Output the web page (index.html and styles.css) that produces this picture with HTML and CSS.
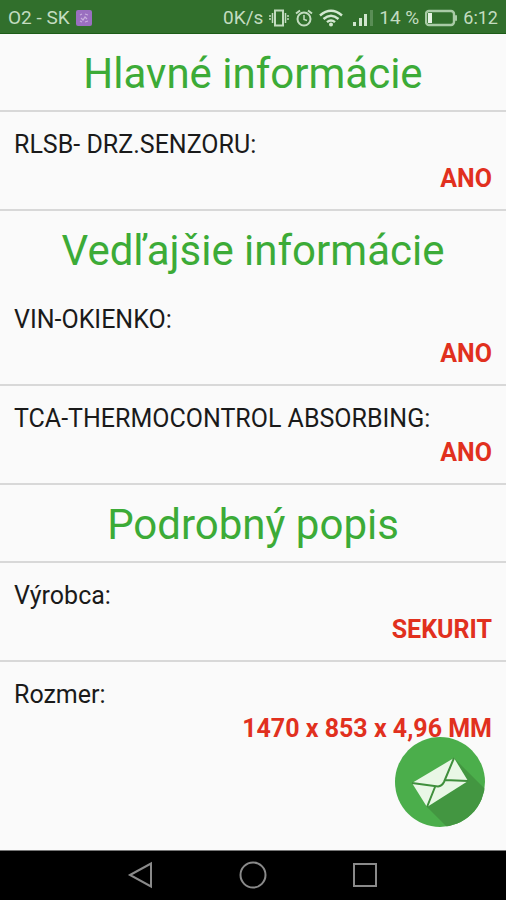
FILE: index.html
```html
<!DOCTYPE html>
<html lang="sk">

<head>
  <meta charset="UTF-8" />
  <meta name="viewport" content="width=device-width, initial-scale=1.0" />
  <title>Informácie</title>
  <link rel="stylesheet" href="styles.css">
</head>

<body>
  <!-- status bar -->
  <header class="status">
    <span class="carrier">O2 - SK</span>
    <svg class="app-icon" width="16" height="16" viewBox="0 0 16 16">
      <rect width="16" height="16" rx="2" fill="#9a6fc0" />
      <path d="M4 5l2 -1M9 4l3 1M5 8l2 2 2 -3 2 2M4 11l2 1M9 12l3 -1" fill="none" stroke="#c9aede" stroke-width="1.2" />
    </svg>
    <span class="speed">0K/s</span>
    <svg width="20" height="18" viewBox="0 0 20 18" fill="none" stroke="#c3dcc0" stroke-width="2">
      <rect x="6" y="1.500" width="8" height="15" />
      <path d="M3.500 4v10M16.500 4v10" stroke-width="1.500" />
      <path d="M1 6v6M19 6v6" stroke-width="1.500" stroke-dasharray="2 1" />
    </svg>
    <svg width="18" height="18" viewBox="0 0 18 18" fill="none" stroke="#c3dcc0" stroke-width="2">
      <circle cx="9" cy="10" r="6.500" />
      <path d="M9 6v4.500l3 1" stroke-width="1.500" />
      <path d="M1 4.500l4 -3M17 4.500l-4 -3" />
    </svg>
    <svg class="wifi" width="24" height="18" viewBox="0 0 24 18" fill="none" stroke="#d3e8d0" stroke-width="2.400">
      <path d="M1 6.500q11 -9.500 22 0" />
      <path d="M4.500 10q7.500 -6.500 15 0" />
      <path d="M8 13.200q4 -3.500 8 0" />
      <circle cx="12" cy="15.500" r="2" fill="#d3e8d0" stroke="none" />
    </svg>
    <svg width="20" height="18" viewBox="0 0 20 18" fill="#cfe5cc">
      <rect x="0" y="13" width="3" height="4" />
      <rect x="6" y="9" width="3" height="8" />
      <rect x="11" y="5" width="3" height="12" />
      <rect x="17" y="1" width="3" height="16" fill="#5a8e56" />
    </svg>
    <span class="percent">14 %</span>
    <svg width="32" height="18" viewBox="0 0 32 18">
      <rect x="1" y="2" width="28" height="14" rx="3" fill="none" stroke="#a9cba6" stroke-width="2.400" />
      <rect x="3" y="4" width="4" height="10" fill="#e6f3e4" />
      <rect x="30" y="6" width="2" height="6" rx="1" fill="#a9cba6" />
    </svg>
    <span class="clock">6:12</span>
  </header>

  <!-- content -->
  <main class="content">
    <h2 class="title line">Hlavné informácie</h2>
    <dl class="row">
      <dt>RLSB- DRZ.SENZORU:</dt>
      <dd>ANO</dd>
    </dl>

    <h2 class="title">Vedľajšie informácie</h2>
    <dl class="row">
      <dt>VIN-OKIENKO:</dt>
      <dd>ANO</dd>
    </dl>
    <dl class="row">
      <dt>TCA-THERMOCONTROL ABSORBING:</dt>
      <dd>ANO</dd>
    </dl>

    <h2 class="title line">Podrobný popis</h2>
    <dl class="row">
      <dt>Výrobca:</dt>
      <dd>SEKURIT</dd>
    </dl>
    <dl class="row">
      <dt>Rozmer:</dt>
      <dd>1470 x 853 x 4,96 MM</dd>
    </dl>

    <!-- floating mail button -->
    <button class="mail" type="button" aria-label="E-mail">
      <svg width="90" height="90" viewBox="0 0 90 90">
        <defs>
          <clipPath id="round"><circle cx="45" cy="45" r="45" /></clipPath>
        </defs>
        <g clip-path="url(#round)">
          <rect width="90" height="90" fill="#4bae4b" />
          <path d="M59 21L100 62V110H72L32 70L73 44z" fill="#439641" />
        </g>
        <path d="M59 21L73 44L32 70L17 46z" fill="#e9f7e6" />
        <path d="M17 46L43 49.500Q47 49 49 45L59 21M32 70L40 50M50 43L73 44" fill="none" stroke="#3f8f3c" stroke-width="2" />
      </svg>
    </button>
  </main>

  <!-- navigation bar -->
  <nav class="navbar">
    <button type="button" aria-label="Späť">
      <svg width="28" height="28" viewBox="0 0 28 28">
        <path d="M3 14L24 2.500V25.500z" />
      </svg>
    </button>
    <button type="button" aria-label="Domov">
      <svg width="28" height="28" viewBox="0 0 28 28">
        <circle cx="14" cy="14" r="12.500" />
      </svg>
    </button>
    <button type="button" aria-label="Posledné">
      <svg width="28" height="28" viewBox="0 0 28 28">
        <rect x="3" y="3" width="22" height="22" />
      </svg>
    </button>
  </nav>
</body>

</html>
```
FILE: styles.css
```css
* {
  margin: 0;
  padding: 0;
  box-sizing: border-box;
}

body {
  display: flex;
  flex-direction: column;
  min-height: 100vh;
  background: #fafafa;
  font-family: Roboto, "Liberation Sans", sans-serif;
}

button {
  border: none;
  background: none;
  cursor: pointer;
}

svg {
  display: block;
  flex: none;
}

.status {
  display: flex;
  align-items: center;
  gap: 6px;
  height: 34px;
  padding: 2px 8px 0;
  background: #316f2c;
  border-bottom: 1px solid #1c5c17;
  color: #c3dcc0;
  font-size: 19px;
  white-space: nowrap;
}

.status .speed {
  margin-left: auto;
}

.status .wifi {
  margin-right: 4px;
}

.status .clock {
  font-size: 18px;
}

.content {
  position: relative;
  flex: 1;
}

.title {
  padding: 15px 16px 11px;
  color: #3cab37;
  font-size: 42px;
  font-weight: 400;
  line-height: 50px;
  text-align: center;
}

.line,
.row {
  border-bottom: 2px solid #d8d8d8;
}

.row {
  padding: 16px 14px 13px;
  font-size: 25px;
  line-height: 34px;
}

.row:last-of-type {
  border-bottom: none;
}

.row dt {
  color: #1a1a1a;
}

.row dd {
  color: #e1301e;
  font-weight: 700;
  text-align: right;
}

.mail {
  position: absolute;
  right: 21px;
  bottom: 23px;
  border-radius: 50%;
}

.navbar {
  display: flex;
  justify-content: center;
  align-items: center;
  gap: 84px;
  height: 50px;
  padding-bottom: 1px;
  background: #000;
  border-top: 1px solid #777;
}

.navbar svg {
  fill: none;
  stroke: #8a8a8a;
  stroke-width: 2;
}
```
